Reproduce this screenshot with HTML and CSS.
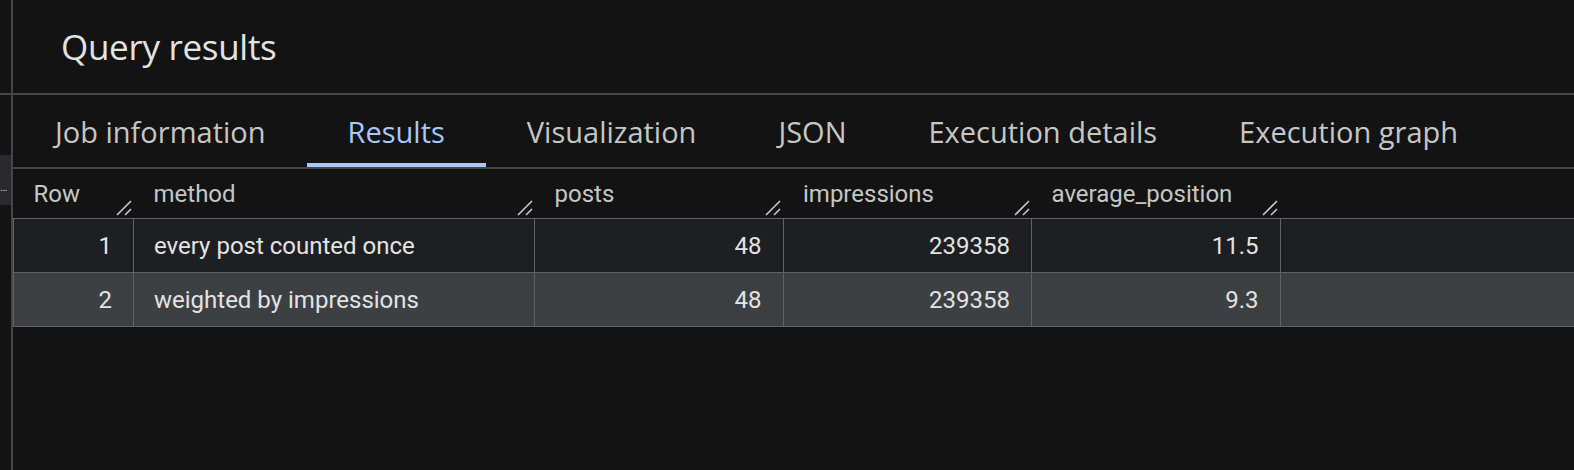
FILE: index.html
```html
<!DOCTYPE html>
<html lang="en">
<head>
    <meta charset="UTF-8">
    <meta name="viewport" content="width=device-width, initial-scale=1.0">
    <title>Query results</title>
    <link rel="stylesheet" href="styles.css">
</head>
<body>
    <!-- Collapsed side panel -->
    <div class="side">
        <div class="side-top"></div>
        <div class="side-tab">&hellip;</div>
    </div>

    <div class="main">
        <!-- Title bar -->
        <div class="title-bar">
            <h1 class="title">Query results</h1>
        </div>

        <!-- Tabs -->
        <div class="tabs">
            <div class="tab">Job information</div>
            <div class="tab active">Results</div>
            <div class="tab">Visualization</div>
            <div class="tab">JSON</div>
            <div class="tab">Execution details</div>
            <div class="tab">Execution graph</div>
        </div>

        <!-- Results grid -->
        <table class="results">
            <colgroup>
                <col class="col-row">
                <col class="col-method">
                <col class="col-num">
                <col class="col-num">
                <col class="col-num">
                <col>
            </colgroup>
            <thead>
                <tr>
                    <th>Row<span class="handle"><svg viewBox="0 0 16 16" width="16" height="16"><path d="M1 15L15 1M9 15L15 9" stroke="#c4c7c5" stroke-width="1.6" fill="none"/></svg></span></th>
                    <th>method<span class="handle"><svg viewBox="0 0 16 16" width="16" height="16"><path d="M1 15L15 1M9 15L15 9" stroke="#c4c7c5" stroke-width="1.6" fill="none"/></svg></span></th>
                    <th>posts<span class="handle"><svg viewBox="0 0 16 16" width="16" height="16"><path d="M1 15L15 1M9 15L15 9" stroke="#c4c7c5" stroke-width="1.6" fill="none"/></svg></span></th>
                    <th>impressions<span class="handle"><svg viewBox="0 0 16 16" width="16" height="16"><path d="M1 15L15 1M9 15L15 9" stroke="#c4c7c5" stroke-width="1.6" fill="none"/></svg></span></th>
                    <th>average_position<span class="handle"><svg viewBox="0 0 16 16" width="16" height="16"><path d="M1 15L15 1M9 15L15 9" stroke="#c4c7c5" stroke-width="1.6" fill="none"/></svg></span></th>
                    <th></th>
                </tr>
            </thead>
            <tbody>
                <tr>
                    <td class="num">1</td>
                    <td>every post counted once</td>
                    <td class="num">48</td>
                    <td class="num">239358</td>
                    <td class="num">11.5</td>
                    <td></td>
                </tr>
                <tr class="selected">
                    <td class="num">2</td>
                    <td>weighted by impressions</td>
                    <td class="num">48</td>
                    <td class="num">239358</td>
                    <td class="num">9.3</td>
                    <td></td>
                </tr>
            </tbody>
        </table>
    </div>
</body>
</html>
```

FILE: styles.css
```css
/* Page */
body {
    margin: 0;
    height: 470px;
    overflow: hidden;
    display: flex;
    background-color: #131314;
    font-family: Roboto, 'Liberation Sans', sans-serif;
    color: #e3e3e3;
}

/* Side panel strip on the left */
.side {
    width: 11px;
    border-right: 2px solid #444746;
    flex-shrink: 0;
}

.side-top {
    height: 93px;
    border-bottom: 2px solid #444746;
    margin-right: -2px;
}

.side-tab {
    margin-top: 60px;
    height: 50px;
    box-sizing: border-box;
    padding-top: 26px;
    background-color: #282a2f;
    color: #c4c7c5;
    font-size: 11px;
    line-height: 14px;
    overflow: hidden;
}

.main {
    flex: 1;
    min-width: 0;
}

/* Title */
.title-bar {
    height: 93px;
    border-bottom: 2px solid #444746;
    display: flex;
    align-items: center;
}

.title {
    margin: 0 0 0 48px;
    font-family: 'Open Sans', sans-serif;
    font-weight: 400;
    font-size: 35px;
    color: #e3e3e3;
    letter-spacing: -0.3px;
}

/* Tab bar */
.tabs {
    display: flex;
    height: 72px;
    padding-left: 1px;
    border-bottom: 2px solid #444746;
}

.tab {
    padding: 4px 41px 0;
    display: flex;
    align-items: center;
    font-family: 'Open Sans', sans-serif;
    font-size: 29px;
    font-weight: 500;
    color: #c4c7c5;
    border-bottom: 4px solid transparent;
}

.tab.active {
    color: #a8c7fa;
    border-bottom-color: #a8c7fa;
}

/* Results table */
.results {
    width: 100%;
    table-layout: fixed;
    border-collapse: collapse;
    font-size: 24px;
}

.col-row { width: 120px; }
.col-method { width: 401px; }
.col-num { width: 248.5px; }

.results th {
    position: relative;
    height: 45px;
    padding: 2px 20px;
    text-align: left;
    font-weight: 400;
    color: #c4c7c5;
    vertical-align: middle;
    white-space: nowrap;
}

.handle {
    position: absolute;
    right: 2px;
    bottom: 2px;
    width: 16px;
    height: 16px;
}

.handle svg {
    display: block;
}

.results td {
    height: 53px;
    padding: 0 20px;
    border: 1px solid #5f6368;
    white-space: nowrap;
}

.results td:last-child {
    border-right: none;
}

.results td.num {
    text-align: right;
    padding-right: 21px;
}

.results tbody tr {
    background-color: #1e1f22;
}

.results tbody tr.selected {
    background-color: #3c4043;
}
```
